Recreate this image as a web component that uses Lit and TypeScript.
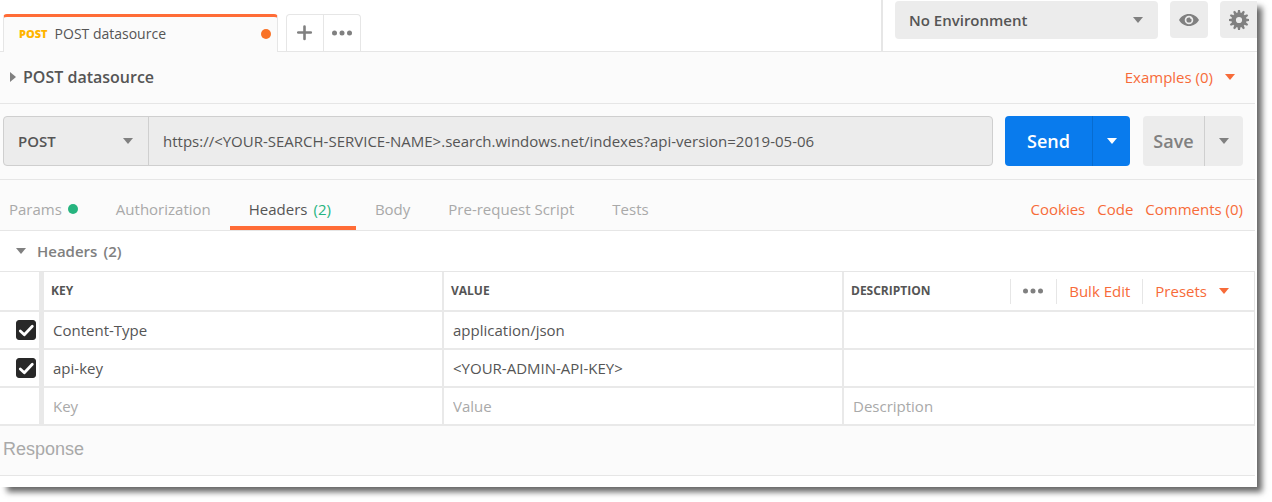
import { LitElement, html, svg, css } from "lit";
import { customElement, state } from "lit/decorators.js";

interface HeaderRow {
  key: string;
  value: string;
  description: string;
  enabled: boolean;
}

const caretDown = () => html`<svg class="caret" width="10" height="6" viewBox="0 0 10 6" aria-hidden="true">
  <path d="M0 0h10L5 6z" fill="currentColor" />
</svg>`;

const dots = () => html`<svg width="20" height="6" viewBox="0 0 20 6" aria-hidden="true">
  <g fill="currentColor"><circle cx="2.5" cy="3" r="2.5" /><circle cx="10" cy="3" r="2.5" /><circle cx="17.5" cy="3" r="2.5" /></g>
</svg>`;

const plus = () => html`<svg width="16" height="16" viewBox="0 0 16 16" aria-hidden="true">
  <path d="M7.5 1.500v12.500M1.200 7.500h12.600" stroke="currentColor" stroke-width="2.600" stroke-linecap="round" />
</svg>`;

const eye = () => html`<svg width="20" height="12" viewBox="0 0 20 12" aria-hidden="true">
  <path fill="currentColor" fill-rule="evenodd"
    d="M10 0C5.600 0 2 2.400 0 6c2 3.600 5.600 6 10 6s8-2.400 10-6c-2-3.600-5.600-6-10-6zm0 10.300a4.300 4.300 0 1 1 0-8.600 4.300 4.300 0 0 1 0 8.600z" />
  <path fill="currentColor" d="M10 3.400a2.600 2.600 0 1 0 2.600 2.600c0-.4-.1-.8-.3-1.100a1.200 1.200 0 0 1-1.300-1.300c-.3-.1-.6-.2-1-.2z" />
</svg>`;

const gear = () => html`<svg width="20" height="20" viewBox="0 0 20 20" aria-hidden="true">
  <circle cx="10" cy="10" r="5.300" fill="none" stroke="currentColor" stroke-width="4.400" />
  ${Array.from({ length: 12 }, (_, i) => svg`<path d="M8.500 3.200L9 0h2l.5 3.200z" fill="currentColor" transform="rotate(${i * 30} 10 10)" />`)}
</svg>`;

@customElement("app-root")
export class AppRoot extends LitElement {
  @state() private rows: HeaderRow[] = [
    { key: "Content-Type", value: "application/json", description: "", enabled: true },
    { key: "api-key", value: "<YOUR-ADMIN-API-KEY>", description: "", enabled: true },
  ];

  @state() private url =
    "https://<YOUR-SEARCH-SERVICE-NAME>.search.windows.net/indexes?api-version=2019-05-06";

  static styles = css`
    :host {
      display: block;
      overflow: hidden;
      font-family: "Open Sans", "Noto Sans", sans-serif;
      font-size: 15px;
      line-height: 20px;
      color: #555;
      background: #fff;
    }
    * { box-sizing: border-box; }
    button, input, select {
      font: inherit;
      color: inherit;
      margin: 0;
      padding: 0;
      border: 0;
      background: none;
      border-radius: 0;
    }
    button { cursor: pointer; }
    a { color: #f76b39; text-decoration: none; }
    svg { display: block; flex: none; }
    h1, h2 { margin: 0; font-size: inherit; font-weight: 600; }

    .window {
      margin: 0 15px 15px 0;
      padding-bottom: 11px;
      background: #fff;
      box-shadow: 6px 6px 6px -1px rgba(0, 0, 0, 0.6);
    }

    .topbar {
      display: flex;
      height: 52px;
      border-bottom: 1px solid #e6e6e6;
    }
    .tabs {
      flex: 1;
      display: flex;
      align-items: flex-end;
      gap: 8px;
      padding-left: 3px;
    }
    .tab {
      display: flex;
      align-items: center;
      gap: 7px;
      width: 275px;
      height: 38px;
      margin-bottom: -1px;
      padding: 0 6px 2px 15px;
      border: 1px solid #e6e6e6;
      border-top: 3px solid #ff6c37;
      border-bottom: 0;
      border-radius: 4px 4px 0 0;
      background: #fbfbfb;
      font-size: 14px;
    }
    .verb { font-size: 11px; font-weight: 800; color: #ffb400; }
    .unsaved {
      width: 10px;
      height: 10px;
      margin-left: auto;
      border-radius: 50%;
      background: #f97226;
    }
    .tab-actions {
      display: flex;
      height: 37px;
      border: 1px solid #e6e6e6;
      border-bottom: 0;
      border-radius: 4px 4px 0 0;
      color: #808080;
    }
    .tab-actions button {
      display: grid;
      place-items: center;
      width: 36px;
    }
    .tab-actions button + button {
      width: 37px;
      border-left: 1px solid #e6e6e6;
    }
    .environment {
      display: flex;
      gap: 12px;
      padding: 1px 0 0 12px;
      border-left: 2px solid #e6e6e6;
      color: #808080;
    }
    .picker { display: grid; align-items: center; }
    .picker select {
      grid-area: 1 / 1;
      width: 100%;
      height: 100%;
      appearance: none;
      font-weight: 600;
      color: #555;
      padding-left: 14px;
      cursor: pointer;
    }
    .picker .caret {
      grid-area: 1 / 1;
      justify-self: end;
      margin-right: 15px;
      color: #808080;
      pointer-events: none;
    }
    .env-picker {
      width: 263px;
      height: 38px;
      border-radius: 4px;
      background: #ececec;
    }
    .icon-button {
      display: grid;
      place-items: center;
      width: 38px;
      height: 37px;
      border-radius: 4px;
      background: #ececec;
    }
    .icon-button.edge {
      width: 37px;
      border-radius: 4px 0 0 4px;
    }

    .request { margin-right: 2px; background: #fbfbfb; }
    .title-row {
      display: flex;
      align-items: center;
      justify-content: space-between;
      height: 52px;
      padding: 0 20px 2px 10px;
      border-bottom: 1px solid #e6e6e6;
    }
    .title {
      display: flex;
      align-items: center;
      gap: 7px;
      font-size: 16px;
    }
    .title svg { color: #808080; }
    .menu-button {
      display: flex;
      align-items: center;
      gap: 12px;
      color: #f76b39;
    }
    .url-row {
      display: flex;
      gap: 12px;
      padding: 12px 12px 13px 3px;
      border-bottom: 1px solid #e6e6e6;
    }
    .url-group {
      flex: 1;
      display: flex;
      height: 50px;
      border: 1px solid #cfcfcf;
      border-radius: 4px;
      background: #ececec;
    }
    .method-picker { width: 145px; border-right: 1px solid #cfcfcf; }
    .url-input { flex: 1; min-width: 0; padding: 0 14px; }
    .split {
      display: flex;
      height: 50px;
      border-radius: 4px;
      overflow: hidden;
      font-size: 18px;
      font-weight: 600;
    }
    .split button { display: grid; place-items: center; }
    .split button + button { border-left: 1px solid rgba(0, 0, 0, 0.12); }
    .send { background: #097bed; color: #fff; }
    .send button { width: 87px; }
    .send button + button { width: 38px; }
    .save { margin-left: 1px; background: #ececec; color: #808080; }
    .save button { width: 61px; }
    .save button + button { width: 39px; }

    .section-row {
      display: flex;
      justify-content: space-between;
      height: 51px;
      padding-right: 12px;
      border-bottom: 1px solid #e6e6e6;
    }
    .section-tabs { display: flex; }
    .section-tabs button {
      display: flex;
      align-items: center;
      gap: 6px;
      padding: 12px 19px 0;
      border-bottom: 4px solid transparent;
      color: #a9a9a9;
      height: 50px;
    }
    .section-tabs button:first-child { padding-left: 9px; }
    .section-tabs button.active {
      padding-right: 25px;
      border-bottom-color: #ff6c37;
      color: #555;
    }
    .set-mark {
      width: 10px;
      height: 10px;
      border-radius: 50%;
      background: #26b47f;
    }
    .count { color: #26b47f; }
    .links {
      display: flex;
      align-items: center;
      gap: 12px;
      padding-top: 8px;
    }

    .headers { margin-right: 2px; }
    .headers-title {
      display: flex;
      align-items: center;
      gap: 11px;
      height: 40px;
      padding-left: 16px;
      color: #808080;
    }
    .headers-title h2 { display: flex; gap: 6px; }
    table {
      width: 100%;
      table-layout: fixed;
      border-collapse: separate;
      border-spacing: 0;
      border-top: 1px solid #e6e6e6;
      border-right: 1px solid #e6e6e6;
    }
    .col-toggle { width: 44px; }
    .col-field { width: 400px; }
    th, td {
      padding: 0;
      height: 38px;
      border-right: 2px solid #e9e9e9;
      border-bottom: 2px solid #e9e9e9;
      text-align: left;
    }
    th {
      height: 40px;
      padding-left: 7px;
      font-size: 12px;
      font-weight: 700;
    }
    th:first-child, td:first-child { border-right: 5px solid #e9e9e9; }
    th:last-child, td:last-child { border-right: 0; }
    td input.field {
      display: block;
      width: 100%;
      height: 36px;
      padding: 0 9px 1px;
    }
    td input::placeholder { color: #a9a9a9; opacity: 1; }
    .toggle {
      display: grid;
      width: 20px;
      height: 20px;
      margin-left: 16px;
    }
    .toggle input {
      grid-area: 1 / 1;
      appearance: none;
      width: 20px;
      height: 20px;
      border: 1px solid #282828;
      border-radius: 3px;
    }
    .toggle input:checked { background: #282828; }
    .toggle svg { grid-area: 1 / 1; pointer-events: none; }
    .description-head {
      display: flex;
      align-items: center;
      justify-content: space-between;
    }
    .table-tools {
      display: flex;
      align-items: center;
      padding-right: 25px;
      font-size: 15px;
      font-weight: 400;
    }
    .table-tools button {
      height: 25px;
      padding: 0 12px;
      border-left: 1px solid #e6e6e6;
      color: #f76b39;
    }
    .table-tools .menu-button { padding-right: 0; }
    .table-tools .more { color: #808080; padding-right: 13px; }

    .response {
      margin-right: 2px;
      height: 50px;
      padding: 13px 3px;
      border-bottom: 1px solid #e6e6e6;
      background: #fbfbfb;
      font-family: "Liberation Sans", Arial, sans-serif;
      font-size: 18px;
      color: #a9a9a9;
    }
    .response h2 { font-weight: 400; }
  `;

  private toggleRow(index: number) {
    this.rows = this.rows.map((row, i) => (i === index ? { ...row, enabled: !row.enabled } : row));
  }

  private renderRow(row: HeaderRow, index: number) {
    return html`<tr>
      <td>
        <label class="toggle">
          <input type="checkbox" aria-label="Enable ${row.key}" .checked=${row.enabled} @change=${() => this.toggleRow(index)} />
          <svg width="20" height="20" viewBox="0 0 20 20" aria-hidden="true">
            <path d="M4.300 11l4 3.700 8-8.500" fill="none" stroke="#fff" stroke-width="2.800" stroke-linecap="round" stroke-linejoin="round" />
          </svg>
        </label>
      </td>
      <td><input class="field" aria-label="Key" .value=${row.key} /></td>
      <td><input class="field" aria-label="Value" .value=${row.value} /></td>
      <td><input class="field" aria-label="Description" .value=${row.description} /></td>
    </tr>`;
  }

  render() {
    return html`
      <div class="window">
        <header class="topbar">
          <div class="tabs">
            <div class="tab">
              <span class="verb">POST</span>
              <span>POST datasource</span>
              <span class="unsaved"></span>
            </div>
            <div class="tab-actions">
              <button aria-label="New tab">${plus()}</button>
              <button aria-label="Tab options">${dots()}</button>
            </div>
          </div>
          <div class="environment">
            <div class="picker env-picker">
              <select aria-label="Environment"><option>No Environment</option></select>
              ${caretDown()}
            </div>
            <button class="icon-button" aria-label="Environment quick look">${eye()}</button>
            <button class="icon-button edge" aria-label="Manage environments">${gear()}</button>
          </div>
        </header>

        <main>
          <section class="request">
            <div class="title-row">
              <h1 class="title">
                <svg width="6" height="10" viewBox="0 0 6 10" aria-hidden="true"><path d="M0 0l6 5-6 5z" fill="currentColor" /></svg>
                POST datasource
              </h1>
              <button class="menu-button">Examples (0) ${caretDown()}</button>
            </div>

            <div class="url-row">
              <div class="url-group">
                <div class="picker method-picker">
                  <select aria-label="Method"><option>POST</option></select>
                  ${caretDown()}
                </div>
                <input class="url-input" type="text" aria-label="Request URL" .value=${this.url} />
              </div>
              <div class="split send">
                <button>Send</button>
                <button aria-label="Send options">${caretDown()}</button>
              </div>
              <div class="split save">
                <button>Save</button>
                <button aria-label="Save options">${caretDown()}</button>
              </div>
            </div>

            <div class="section-row">
              <nav class="section-tabs">
                <button>Params <span class="set-mark"></span></button>
                <button>Authorization</button>
                <button class="active">Headers <span class="count">(2)</span></button>
                <button>Body</button>
                <button>Pre-request Script</button>
                <button>Tests</button>
              </nav>
              <div class="links">
                <a href="#cookies">Cookies</a>
                <a href="#code">Code</a>
                <a href="#comments">Comments (0)</a>
              </div>
            </div>
          </section>

          <section class="headers">
            <div class="headers-title">${caretDown()}<h2><span>Headers</span><span>(2)</span></h2></div>
            <table>
              <colgroup>
                <col class="col-toggle" />
                <col class="col-field" />
                <col class="col-field" />
                <col />
              </colgroup>
              <thead>
                <tr>
                  <th></th>
                  <th>KEY</th>
                  <th>VALUE</th>
                  <th>
                    <div class="description-head">
                      <span>DESCRIPTION</span>
                      <div class="table-tools">
                        <button class="more" aria-label="Column options">${dots()}</button>
                        <button>Bulk Edit</button>
                        <button class="menu-button">Presets ${caretDown()}</button>
                      </div>
                    </div>
                  </th>
                </tr>
              </thead>
              <tbody>
                ${this.rows.map((row, i) => this.renderRow(row, i))}
                <tr>
                  <td></td>
                  <td><input class="field" aria-label="New key" placeholder="Key" /></td>
                  <td><input class="field" aria-label="New value" placeholder="Value" /></td>
                  <td><input class="field" aria-label="New description" placeholder="Description" /></td>
                </tr>
              </tbody>
            </table>
          </section>

          <section class="response"><h2>Response</h2></section>
        </main>
      </div>
    `;
  }
}
